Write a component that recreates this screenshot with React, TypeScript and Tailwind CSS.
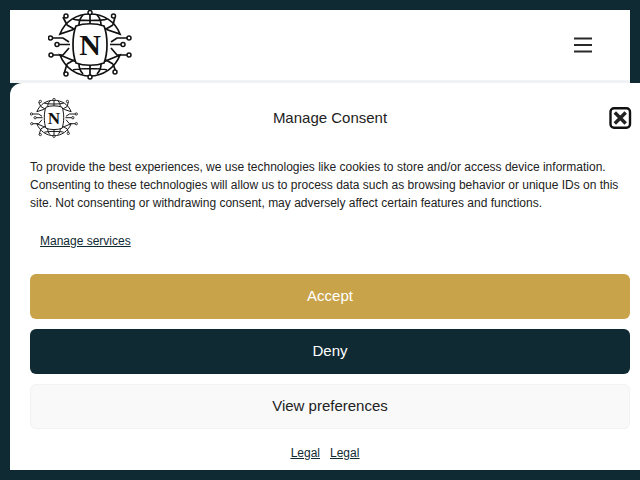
function Logo({ className }: { className: string }) {
  return (
    <svg className={className} viewBox="0 0 84 70" fill="none" stroke="#111" strokeWidth="1.700">
      {/* globe, top half */}
      <path d="M12 24C17 11 29 4 42 4C55 4 67 11 72 24L60 20C54 15 30 15 24 20Z" />
      <path d="M42 3V15M35 5C32 8 31 12 31 15M49 5C52 8 53 12 53 15M25 9C30 11 54 11 59 9" />
      <path d="M19 15L26 19M65 15L58 19" />
      {/* globe, bottom half */}
      <path d="M12 45C17 58 29 66 42 66C55 66 67 58 72 45L60 50C54 54 30 54 24 50Z" />
      <path d="M42 67V54M35 64C32 61 31 57 31 54M49 64C52 61 53 57 53 54M25 60C30 58 54 58 59 60" />
      <path d="M19 54L26 50M65 54L58 50" />
      {/* centre barrel */}
      <path d="M28 16C36 13 48 13 56 16C60 26 60 43 56 53C48 56 36 56 28 53C24 43 24 26 28 16Z" fill="#fff" />
      {/* traces */}
      <path d="M3.500 28H15L21 32M10 34.500H22M4 45H15L21 38" />
      <path d="M80.500 28H69L63 32M74 34.500H62M80 45H69L63 38" />
      <path d="M19 15L15 7M65 15L67 7M19 54L16 64M65 54L68 62" />
      {/* nodes */}
      <g fill="#fff" strokeWidth="1.500">
        <circle cx="42" cy="2.500" r="2" />
        <circle cx="42" cy="67" r="2" />
        <circle cx="18" cy="6" r="2" />
        <circle cx="65.500" cy="6" r="2" />
        <circle cx="18" cy="64" r="2" />
        <circle cx="67" cy="62" r="2" />
        <circle cx="2.500" cy="28" r="2" />
        <circle cx="9" cy="34.500" r="2" />
        <circle cx="3" cy="45" r="2" />
        <circle cx="81" cy="28" r="2" />
        <circle cx="75" cy="34.500" r="2" />
        <circle cx="81" cy="45" r="2" />
      </g>
      <text
        x="42"
        y="45"
        textAnchor="middle"
        fontFamily="'Liberation Serif', serif"
        fontWeight="700"
        fontSize="30"
        fill="#111"
        stroke="none"
      >
        N
      </text>
    </svg>
  );
}

export default function App() {
  return (
    <div className="relative h-[480px] w-[640px] overflow-hidden bg-[#102a33] p-2.5 font-['Liberation_Sans',Arial,sans-serif]">
      {/* site header */}
      <div className="flex h-[73px] items-center justify-between border-b-[3px] border-[#f1f2f3] bg-white pl-[38px] pr-[38px]">
        <Logo className="h-[70px] w-[84px]" />
        <svg className="h-[16px] w-[18px]" viewBox="0 0 18 16" fill="none" stroke="#2a2a2a" strokeWidth="2">
          <path d="M0 1.500H18M0 8H18M0 14.500H18" />
        </svg>
      </div>

      {/* consent dialog */}
      <div className="absolute left-[10px] top-[83px] flex h-[387px] w-[630px] flex-col rounded-tl-xl bg-white pl-5 pr-2.5 pt-[15px] text-[#222]">
        <div className="grid h-[40px] grid-cols-[1fr_auto_1fr] items-center">
          <Logo className="h-[40px] w-[48px]" />
          <div className="text-[15px]">Manage Consent</div>
          <svg className="mr-[-2px] h-[24px] w-[24px] justify-self-end" viewBox="0 0 24 24" fill="none">
            <rect x="2.500" y="2.200" width="19.500" height="19.600" rx="3.500" stroke="#111" strokeWidth="2.400" />
            <path d="M6.800 6.500L17.700 17.500M17.700 6.500L6.800 17.500" stroke="#222" strokeWidth="3.400" />
          </svg>
        </div>

        <p className="mt-5 text-[12px] leading-[18px]">
          To provide the best experiences, we use technologies like cookies to store and/or access device information.
          Consenting to these technologies will allow us to process data such as browsing behavior or unique IDs on this
          site. Not consenting or withdrawing consent, may adversely affect certain features and functions.
        </p>

        <a className="ml-2.5 mt-[20px] text-[12px] leading-[18px] text-[#102a33] underline">Manage services</a>

        <div className="mt-[24px] flex flex-col gap-2.5">
          <button className="h-[45px] rounded-md bg-[#c9a34a] text-[15px] text-white">Accept</button>
          <button className="h-[45px] rounded-md bg-[#102a33] text-[15px] text-white">Deny</button>
          <button className="h-[45px] rounded-md border border-[#f2f2f2] bg-[#f9f9f9] text-[15px] text-[#222]">
            View preferences
          </button>
        </div>

        <div className="mr-2.5 mt-[15px] flex justify-center gap-2.5 text-[12px] leading-[18px] text-[#102a33] underline">
          <a>Legal</a>
          <a>Legal</a>
        </div>
      </div>
    </div>
  );
}
